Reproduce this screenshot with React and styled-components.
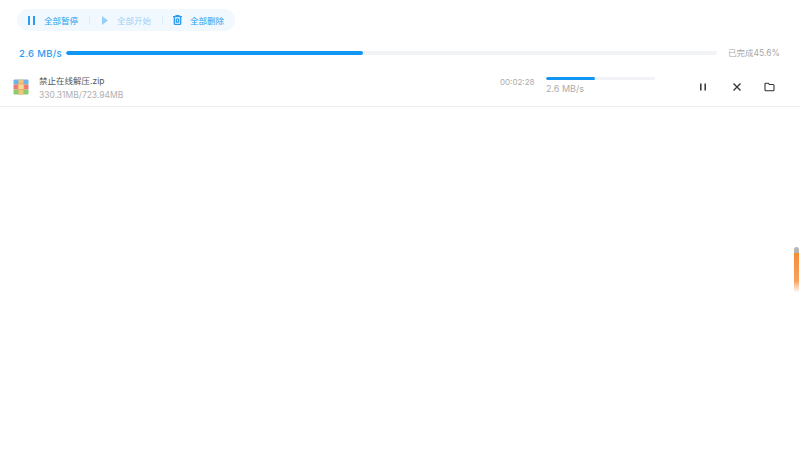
import React from 'react';
import styled, { createGlobalStyle } from 'styled-components';

const Global = createGlobalStyle`
  html, body {
    margin: 0;
    padding: 0;
    background: #fff;
    font-family: "Inter", "Noto Sans CJK SC", sans-serif;
  }
`;

const Page = styled.div`
  width: 800px;
  height: 460px;
  position: relative;
  overflow: hidden;
  background: #fff;
`;

const Toolbar = styled.div`
  display: inline-flex;
  align-items: center;
  height: 22px;
  margin: 9px 0 0 17px;
  padding: 0 11px;
  border-radius: 11px;
  background: #f2f9fe;
`;

const ToolButton = styled.div`
  display: flex;
  align-items: center;
  gap: ${p => p.$gap}px;
  font-size: 8.5px;
  color: #2a9df0;
  opacity: ${p => (p.$disabled ? 0.45 : 1)};
  svg { display: block; }
`;

const Divider = styled.span`
  width: 1px;
  height: 9px;
  margin: 0 ${p => p.$right}px 0 ${p => p.$left}px;
  background: #dcecf8;
`;

const TotalRow = styled.div`
  display: flex;
  align-items: center;
  height: 14px;
  margin-top: 15px;
  padding-left: 19px;
`;

const Speed = styled.span`
  width: 47px;
  font-size: 9.5px;
  font-weight: 500;
  letter-spacing: 0.3px;
  color: #2b9cf0;
  white-space: nowrap;
`;

const Track = styled.div`
  width: ${p => p.$width}px;
  height: ${p => p.$height}px;
  border-radius: 3px;
  background: #f2f3f6;
  overflow: hidden;
`;

const Fill = styled.div`
  height: 100%;
  border-radius: 3px;
  background: #1296f3;
`;

const Done = styled.span`
  margin: 0 0 2px 11px;
  font-size: 8.5px;
  color: #a8a8a8;
  white-space: nowrap;
`;

const Item = styled.div`
  display: flex;
  align-items: center;
  height: 36px;
  margin-top: 10px;
  padding-left: 13px;
  border-bottom: 1px solid #eeeeee;
`;

const FileIcon = styled.svg`
  flex: none;
  display: block;
  margin: 0 10px 2px 0;
`;

const FileInfo = styled.div`
  width: 461px;
`;

const FileName = styled.div`
  font-size: 8.5px;
  line-height: 13px;
  color: #555;
`;

const FileSize = styled.div`
  margin-top: 1px;
  font-size: 8.5px;
  line-height: 12px;
  color: #b0b0b0;
`;

const Time = styled.div`
  width: 46px;
  margin-bottom: 12px;
  font-size: 8px;
  color: #ababab;
`;

const ItemProgress = styled.div`
  align-self: flex-start;
  width: 109px;
  padding-top: 7px;
`;

const ItemSpeed = styled.div`
  margin-top: 3px;
  font-size: 9px;
  line-height: 12px;
  color: #ababab;
`;

const Actions = styled.div`
  display: flex;
  align-items: center;
  gap: 22px;
  margin: 0 0 3px 43px;
  color: #333;
  svg { display: block; }
`;

const CloseIcon = styled.svg`
  margin-left: 2px;
`;

const ScrollThumb = styled.div`
  position: absolute;
  right: 1px;
  top: 247px;
  width: 5px;
  height: 45px;
  border-radius: 3px;
  background: linear-gradient(#b5b5b5 0 6px, #f78b34 6px, #f8a25e 34px, #fbe3cf 42px, #f4f4f6);
`;

const App = () => (
  <Page>
    <Global />
    <Toolbar>
      <ToolButton $gap={9}>
        <svg width="7" height="9" viewBox="0 0 7 9"><path d="M1 0v9M6 0v9" stroke="currentColor" strokeWidth="2" fill="none" /></svg>
        全部暂停
      </ToolButton>
      <Divider $left={11} $right={12} />
      <ToolButton $gap={9} $disabled>
        <svg width="6" height="9" viewBox="0 0 6 9"><path d="M0 0 6 4.5 0 9z" fill="currentColor" /></svg>
        全部开始
      </ToolButton>
      <Divider $left={11} $right={10} />
      <ToolButton $gap={8}>
        <svg width="9" height="10" viewBox="0 0 9 10" fill="none" stroke="currentColor" strokeWidth="1.3">
          <path d="M0 1.7h9M3 1.7V.6h3v1.1M1.3 1.7v6.9c0 .5.3.8.8.8h4.8c.5 0 .8-.3.8-.8V1.7M3.3 4.2h2.4v2.8H3.3z" />
        </svg>
        全部删除
      </ToolButton>
    </Toolbar>
    <TotalRow>
      <Speed>2.6 MB/s</Speed>
      <Track $width={651} $height={4}>
        <Fill style={{ width: '45.6%' }} />
      </Track>
      <Done>已完成45.6%</Done>
    </TotalRow>
    <Item>
      <FileIcon width="16" height="16" viewBox="0 0 16 16">
        <rect x="0.5" y="0.5" width="15" height="5" rx="1" fill="#6fb4e6" />
        <rect x="0.5" y="5.5" width="15" height="5" fill="#ea7a78" />
        <rect x="0.5" y="10.5" width="15" height="5" rx="1" fill="#8ccb6a" />
        <rect x="5.5" y="0.5" width="5" height="15" fill="#f4c27a" />
        <rect x="5" y="5" width="6" height="5.5" fill="#f7d894" stroke="#f09a5a" strokeWidth=".7" />
      </FileIcon>
      <FileInfo>
        <FileName>禁止在线解压.zip</FileName>
        <FileSize>330.31MB/723.94MB</FileSize>
      </FileInfo>
      <Time>00:02:28</Time>
      <ItemProgress>
        <Track $width={109} $height={3}>
          <Fill style={{ width: '45%' }} />
        </Track>
        <ItemSpeed>2.6 MB/s</ItemSpeed>
      </ItemProgress>
      <Actions>
        <svg width="10" height="10" viewBox="0 0 10 10"><path d="M2.8 1.5v7M7.2 1.5v7" stroke="currentColor" strokeWidth="1.5" fill="none" /></svg>
        <CloseIcon width="10" height="10" viewBox="0 0 10 10"><path d="M1.5 1.5l7 7M8.5 1.5l-7 7" stroke="currentColor" strokeWidth="1.3" fill="none" /></CloseIcon>
        <svg width="11" height="10" viewBox="0 0 11 10" fill="none" stroke="currentColor" strokeWidth="1.1">
          <path d="M1 2.2c0-.6.4-1 1-1h2.4l1 1.3H9c.6 0 1 .4 1 1v4.3c0 .6-.4 1-1 1H2c-.6 0-1-.4-1-1z" />
        </svg>
      </Actions>
    </Item>
    <ScrollThumb />
  </Page>
);

export default App;
